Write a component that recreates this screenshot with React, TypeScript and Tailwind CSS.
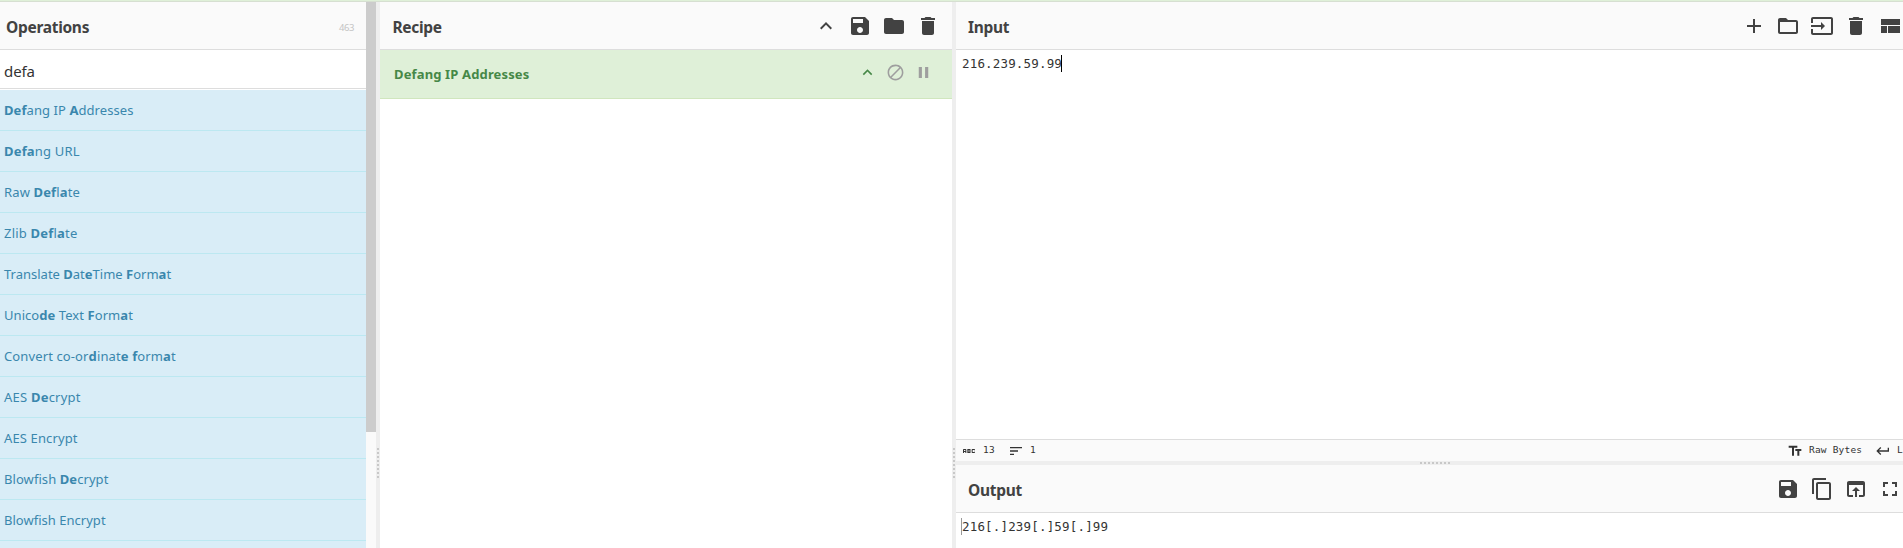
import React from "react";
import { MdAbc } from "react-icons/md";

const PATHS = {
  up: "M7.41 15.41L12 10.83l4.59 4.58L18 14l-6-6-6 6z",
  save: "M17 3H5c-1.11 0-2 .9-2 2v14c0 1.1.89 2 2 2h14c1.1 0 2-.9 2-2V7l-4-4zm-5 16c-1.66 0-3-1.34-3-3s1.34-3 3-3 3 1.34 3 3-1.34 3-3 3zm3-10H5V5h10v4z",
  folder: "M10 4H4c-1.1 0-1.99.9-1.99 2L2 18c0 1.1.9 2 2 2h16c1.1 0 2-.9 2-2V8c0-1.1-.9-2-2-2h-8l-2-2z",
  trash: "M6 19c0 1.1.9 2 2 2h8c1.1 0 2-.9 2-2V7H6v12zM19 4h-3.5l-1-1h-5l-1 1H5v2h14V4z",
  add: "M19 13h-6v6h-2v-6H5v-2h6V5h2v6h6v2z",
  folderOpen: "M20 6h-8l-2-2H4c-1.1 0-1.99.9-1.99 2L2 18c0 1.1.9 2 2 2h16c1.1 0 2-.9 2-2V8c0-1.1-.9-2-2-2zm0 12H4V8h16v10z",
  input: "M21 3.01H3c-1.1 0-2 .9-2 2V9h2V4.99h18v14.03H3V15H1v4.01c0 1.1.9 1.98 2 1.98h18c1.1 0 2-.88 2-1.98v-14c0-1.11-.9-2-2-2zM11 16l4-4-4-4v3H1v2h10v3z",
  compact: "M3 19h6v-7H3v7zm7 0h12v-7H10v7zM3 5v6h19V5H3z",
  copy: "M16 1H4c-1.1 0-2 .9-2 2v14h2V3h12V1zm3 4H8c-1.1 0-2 .9-2 2v14c0 1.1.9 2 2 2h11c1.1 0 2-.9 2-2V7c0-1.1-.9-2-2-2zm0 16H8V7h11v14z",
  open: "M19 4H5c-1.11 0-2 .9-2 2v12c0 1.1.89 2 2 2h4v-2H5V8h14v10h-4v2h4c1.1 0 2-.9 2-2V6c0-1.1-.89-2-2-2zm-7 6l-4 4h3v6h2v-6h3l-4-4z",
  fullscreen: "M7 14H5v5h5v-2H7v-3zm-2-4h2V7h3V5H5v5zm12 7h-3v2h5v-5h-2v3zM14 5v2h3v3h2V5h-5z",
  block: "M12 2C6.48 2 2 6.48 2 12s4.48 10 10 10 10-4.48 10-10S17.52 2 12 2zM4 12c0-4.42 3.58-8 8-8 1.85 0 3.55.63 4.9 1.69L5.69 16.9C4.63 15.55 4 13.85 4 12zm8 8c-1.85 0-3.55-.63-4.9-1.69L18.31 7.1C19.37 8.45 20 10.15 20 12c0 4.42-3.58 8-8 8z",
  pause: "M6 19h4V5H6v14zm8-14v14h4V5h-4z",
  sort: "M3 18h6v-2H3v2zM3 6v2h18V6H3zm0 7h12v-2H3v2z",
  text: "M2.5 4v3h5v12h3V7h5V4h-13zm19 5h-9v3h3v7h3v-7h3V9z",
  enter: "M19 7v4H5.83l3.58-3.59L8 6l-6 6 6 6 1.41-1.41L5.83 13H21V7z",
};

function Icon({ name, className = "size-6" }: { name: keyof typeof PATHS; className?: string }) {
  return (
    <svg viewBox="0 0 24 24" fill="currentColor" className={`shrink-0 ${className}`}>
      <path d={PATHS[name]} />
    </svg>
  );
}

// Matched characters are wrapped in asterisks; the second value is the letter spacing.
const OPERATIONS: [string, string][] = [
  ["*Def*ang IP *A*ddresses", "tracking-[0.07px]"],
  ["*Defa*ng URL", "tracking-[0.18px]"],
  ["Raw *Def*l*a*te", "tracking-[0.14px]"],
  ["Zlib *Def*l*a*te", "tracking-[0.2px]"],
  ["Translate *D*at*e*Time *F*orm*a*t", "tracking-[0px]"],
  ["Unico*de* Text *F*orm*a*t", "tracking-[0.06px]"],
  ["Convert co-or*d*inat*e* *f*orm*a*t", "tracking-[0.12px]"],
  ["AES *De*crypt", "tracking-[0.22px]"],
  ["AES Encrypt", "tracking-[0.12px]"],
  ["Blowfish *De*crypt", "tracking-[0.07px]"],
  ["Blowfish Encrypt", "tracking-[0.02px]"],
  ["", ""],
];

function Highlighted({ text }: { text: string }) {
  return (
    <>
      {text.split("*").map((part, i) => (i % 2 ? <b key={i}>{part}</b> : <span key={i}>{part}</span>))}
    </>
  );
}

function Dots({ className }: { className: string }) {
  return (
    <div className={`flex gap-[2px] ${className}`}>
      {Array.from({ length: 8 }, (_, i) => (
        <i key={i} className="size-[2px] shrink-0 bg-[#c8c8c8]" />
      ))}
    </div>
  );
}

function VerticalGutter() {
  return (
    <div className="w-1 shrink-0 bg-[#eeeeee] pt-[446px] pl-px">
      <Dots className="flex-col" />
    </div>
  );
}

const header = "flex h-12 shrink-0 items-center border-b border-[#dddddd] bg-[#fafafa] pt-px text-[#424242]";
const title = "pt-1 text-[15.5px] font-bold tracking-[-0.3px]";
const mono = "font-['DejaVu_Sans_Mono',monospace]";

export default function App() {
  return (
    <div className="flex h-[548px] w-[1903px] flex-col overflow-hidden bg-white font-['Noto_Sans',sans-serif]">
      <div className="h-[2px] shrink-0 border-b border-[#d6dfd1] bg-[#dff0d8]" />
      <div className="flex min-h-0 flex-1">
        <section className="flex w-[366px] shrink-0 flex-col overflow-hidden">
          <div className={`${header} justify-between pr-3 pl-1.5`}>
            <h2 className={title}>Operations</h2>
            <span className="pt-1 text-[9.5px] tracking-[-0.4px] text-[#c4c4c4]">463</span>
          </div>
          <div className="flex h-[39px] shrink-0 items-center border-b border-[#dddddd] pb-px pl-1 pt-[5px] text-[15px] tracking-[-0.1px] text-[#333333]">
            defa
          </div>
          <ul className="mt-px">
            {OPERATIONS.map(([text, tracking], i) => (
              <li
                key={i}
                className={`flex h-[41px] items-center whitespace-pre border-b border-[#bce8f1] bg-[#d9edf7] pt-[2px] pl-1 text-[13px] text-[#3a87ad] ${tracking}`}
              >
                <div><Highlighted text={text} /></div>
              </li>
            ))}
          </ul>
        </section>
        <div className="w-[10px] shrink-0 bg-[#fafafa]">
          <div className="h-[430px] bg-[#cccccc]" />
        </div>
        <VerticalGutter />

        <section className="flex w-[572px] shrink-0 flex-col">
          <div className={`${header} justify-between pr-3 pl-[12.5px]`}>
            <h2 className={title}>Recipe</h2>
            <div className="flex gap-2.5">
              <Icon name="up" />
              <Icon name="save" />
              <Icon name="folder" />
              <Icon name="trash" />
            </div>
          </div>
          <div className="flex h-[49px] shrink-0 items-center justify-between border-b border-[#d0e6be] bg-[#dff0d8] pr-[19.5px] pl-3.5 pb-1">
            <span className="pt-[5px] text-[13px] font-bold tracking-[0.14px] text-[#468847]">Defang IP Addresses</span>
            <div className="flex gap-[9px] text-[#9e9e9e]">
              <Icon name="up" className="size-[19px] text-[#468847]" />
              <Icon name="block" className="size-[19px]" />
              <Icon name="pause" className="size-[19px]" />
            </div>
          </div>
        </section>
        <VerticalGutter />

        <div className="flex min-w-0 flex-1 flex-col">
          <section className="flex h-[459px] shrink-0 flex-col">
            <div className={`${header} justify-between pr-px pl-3`}>
              <h2 className={title}>Input</h2>
              <div className="flex gap-2.5">
                <Icon name="add" />
                <Icon name="folderOpen" />
                <Icon name="input" />
                <Icon name="trash" />
                <Icon name="compact" />
              </div>
            </div>
            <div className={`${mono} flex flex-1 items-start pt-[5px] pl-1.5 text-[12.5px] leading-[17px] tracking-[0.17px] text-[#333333]`}>
              <span>216.239.59.99</span>
              <i className="-ml-px h-[17px] w-px bg-black" />
            </div>
            <div className={`${mono} flex h-[22px] shrink-0 items-center overflow-hidden whitespace-pre border-t border-[#dddddd] bg-[#fafafa] pl-[5px] text-[9.5px] tracking-[0.2px] text-[#333333]`}>
              <MdAbc className="size-4 shrink-0" />
              <span className="ml-1.5 w-[25px] shrink-0">13</span>
              <Icon name="sort" className="size-4" />
              <span className="ml-1.5">1</span>
              <Icon name="text" className="ml-auto size-4" />
              <span className="ml-1.5 w-[66px] shrink-0">Raw Bytes</span>
              <Icon name="enter" className="size-4" />
              <span className="ml-1.5 w-1.5 shrink-0 overflow-hidden">L</span>
            </div>
          </section>
          <div className="h-1 shrink-0 bg-[#eeeeee] pt-px pl-[464px]">
            <Dots className="" />
          </div>
          <section className="flex flex-1 flex-col">
            <div className={`${header} justify-between pr-px pl-3`}>
              <h2 className={title}>Output</h2>
              <div className="flex gap-2.5">
                <Icon name="save" />
                <Icon name="copy" />
                <Icon name="open" />
                <Icon name="fullscreen" />
              </div>
            </div>
            <div className={`${mono} flex items-start pt-[5px] pl-[5px] text-[12.5px] leading-[17px] tracking-[0.17px] text-[#333333]`}>
              <i className="h-[17px] w-px bg-[#999999]" />
              <span>216[.]239[.]59[.]99</span>
            </div>
          </section>
        </div>
      </div>
    </div>
  );
}
